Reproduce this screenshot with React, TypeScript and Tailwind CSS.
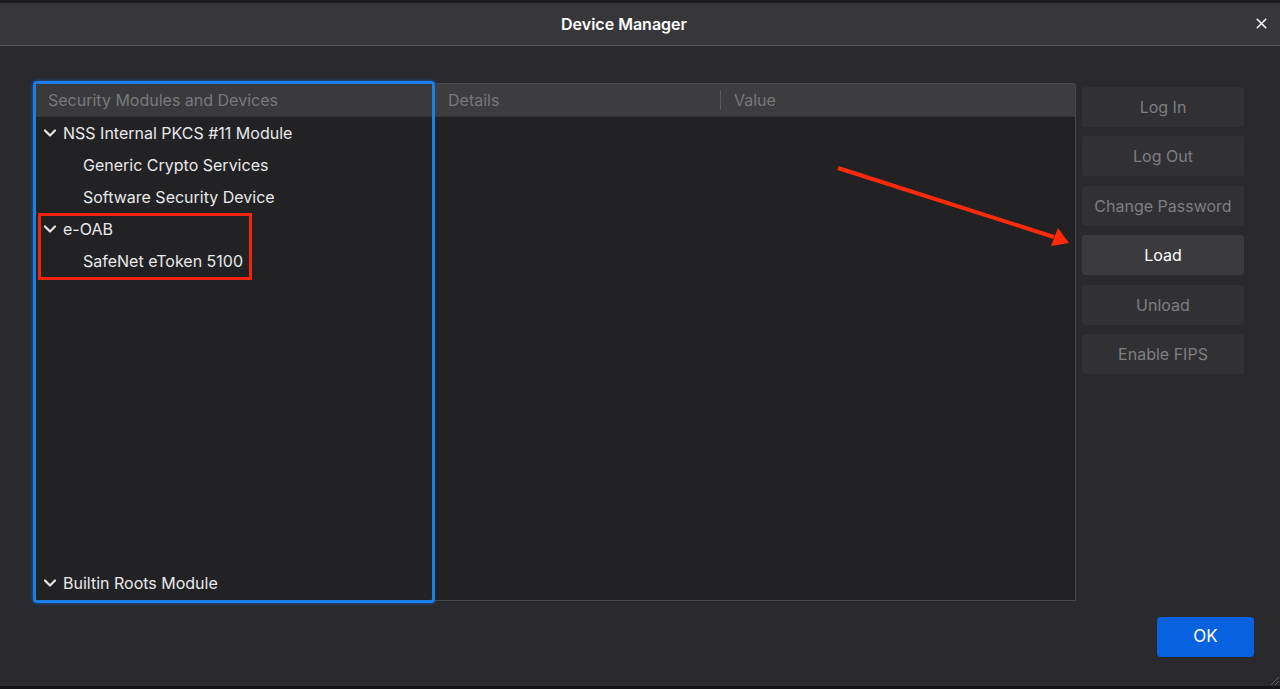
import { X } from 'lucide-react';

const font = { fontFamily: 'Inter, "Noto Sans", sans-serif' };

function Chevron() {
  return (
    <svg width="14" height="14" viewBox="0 0 14 14" className="shrink-0">
      <path d="M2 4.5 L7 9.5 L12 4.5" fill="none" stroke="#e6e6e8" strokeWidth="2.2" strokeLinecap="round" strokeLinejoin="round" />
    </svg>
  );
}

function TreeRow({ label, parent }: { label: string; parent?: boolean }) {
  if (parent) {
    return (
      <div className="h-8 flex items-center pl-[7px] gap-[6px] text-[16px] text-[#e9e9eb]">
        <Chevron />
        <span>{label}</span>
      </div>
    );
  }
  return <div className="h-8 flex items-center pl-[47px] text-[16px] text-[#e9e9eb]">{label}</div>;
}

export default function App() {
  const buttons = ['Log In', 'Log Out', 'Change Password', 'Load', 'Unload', 'Enable FIPS'];

  return (
    <div className="relative w-[1280px] h-[689px] flex flex-col bg-[#2a292e] overflow-hidden" style={font}>
      <div className="h-[3px] bg-[#1c1c1e]" />

      {/* title bar */}
      <div className="relative h-[43px] bg-[#373739] flex items-center justify-center pr-[32px] border-b border-[#58585b]">
        <span className="text-[16px] font-semibold text-white">Device Manager</span>
        <X className="absolute right-[10px] top-[12px] text-white" size={17} strokeWidth={2.2} />
      </div>

      {/* body */}
      <div className="flex-1 flex flex-col pl-[33px] pr-[26px] pt-[35px]">
        <div className="flex items-start">
          {/* tree panel */}
          <div className="w-[402px] h-[522px] flex flex-col rounded-[4px] border-[3px] border-[#1a7fe8] shadow-[0_0_3px_1px_rgba(20,110,220,0.5)] bg-[#222224]">
            <div className="h-[33px] shrink-0 flex items-center pl-[12px] bg-[#3a3a3d] border-b border-[#333335] text-[16px] text-[#79797c]">
              Security Modules and Devices
            </div>
            <div className="relative flex-1 flex flex-col">
              <TreeRow label="NSS Internal PKCS #11 Module" parent />
              <TreeRow label="Generic Crypto Services" />
              <TreeRow label="Software Security Device" />
              <TreeRow label="e-OAB" parent />
              <TreeRow label="SafeNet eToken 5100" />
              <div className="mt-auto mb-[1px]">
                <TreeRow label="Builtin Roots Module" parent />
              </div>
              <div className="absolute left-[2px] top-[96px] w-[214px] h-[67px] border-[3px] border-[#f0250f]" />
            </div>
          </div>

          {/* details table */}
          <div className="mt-[2px] w-[641px] h-[518px] flex flex-col bg-[#222224] border-r border-b border-t border-[#48484b] rounded-tr-[3px]">
            <div className="h-[33px] shrink-0 flex items-center bg-[#3d3d40] border-b border-[#333335] text-[16px] text-[#77777a]">
              <div className="w-[285px] pl-[13px]">Details</div>
              <div className="w-px h-[20px] bg-[#5a5a5d]" />
              <div className="pl-[13px]">Value</div>
            </div>
            <div className="flex-1" />
          </div>

          {/* buttons */}
          <div className="ml-[6px] mt-[6px] w-[162px] flex flex-col gap-[9.4px]">
            {buttons.map((b) => (
              <div
                key={b}
                className={
                  b === 'Load'
                    ? 'h-[40px] rounded-[3px] flex items-center justify-center text-[16px] bg-[#3b3b3e] text-white'
                    : 'h-[40px] rounded-[3px] flex items-center justify-center text-[16px] bg-[#313134] text-[#7e7e81]'
                }
              >
                {b}
              </div>
            ))}
          </div>
        </div>

        <div className="flex justify-end mt-[14px]">
          <div className="w-[97px] h-[40px] rounded-[4px] bg-[#0862e0] flex items-center justify-center text-[17px] text-white">
            OK
          </div>
        </div>
        <div className="flex-1" />
      </div>

      <div className="h-[3px] bg-[#131315]" />

      {/* annotation arrow */}
      <svg className="absolute inset-0 pointer-events-none" width="1280" height="689">
        <line x1="838" y1="168" x2="1054" y2="237" stroke="#ff2a0a" strokeWidth="4" />
        <polygon points="1069,243 1051,246 1058,228" fill="#ff2a0a" />
        <path d="M1271 685 L1279 677 M1275 685 L1279 681" stroke="#5d5d60" strokeWidth="1" />
      </svg>
    </div>
  );
}
